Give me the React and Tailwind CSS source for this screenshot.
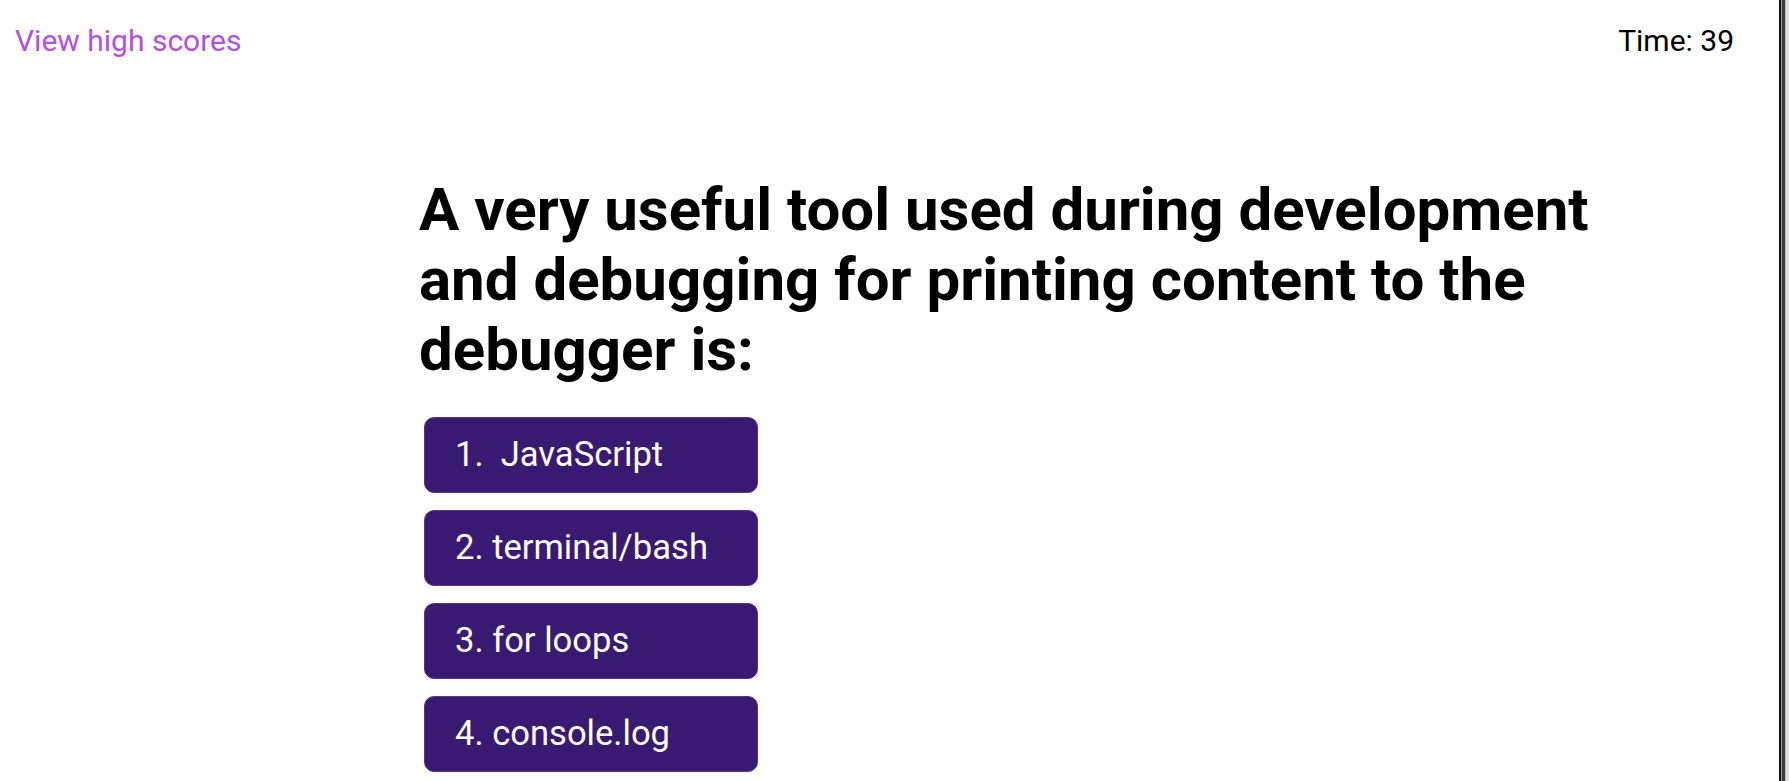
import React from "react";

const choices = ["1.\u00a0 JavaScript", "2. terminal/bash", "3. for loops", "4. console.log"];

export default function App() {
  return (
    <div className="flex h-screen w-full overflow-hidden bg-white font-['Roboto',_'Liberation_Sans',_sans-serif]">
      <div className="flex min-w-0 flex-1 flex-col">
        <header className="flex items-start justify-between pl-[15px] pr-[45px] pt-[23px]">
          <a href="#" className="text-[30px] leading-[35px] text-[#b44fe4]">
            View high scores
          </a>
          <span className="text-[30px] leading-[35px] text-black">Time: 39</span>
        </header>

        <main className="ml-[419px] mt-[117px] w-[1220px]">
          <h1 className="text-[60px] font-bold leading-[70px] text-black">
            A very useful tool used during development and debugging for printing content to the debugger is:
          </h1>
          <div className="mt-[32px] flex flex-col gap-[17px] pl-[5px]">
            {choices.map((choice) => (
              <button
                key={choice}
                className="flex h-[76px] w-[334px] items-center rounded-[10px] border border-[#52378a] bg-[#391a72] pl-[30px] text-left text-[34.6px] text-white"
              >
                {choice}
              </button>
            ))}
          </div>
        </main>
      </div>

      {/* window frame edge */}
      <div className="flex h-full shrink-0">
        <div className="w-[2px] bg-[#111111]" />
        <div className="w-[1px] bg-[#9a9a9a]" />
        <div className="w-[3px] bg-[#3d3d3d]" />
        <div className="w-[1px] bg-[#bdbdbd]" />
        <div className="w-[3px] bg-[#e2e2e2]" />
      </div>
    </div>
  );
}
